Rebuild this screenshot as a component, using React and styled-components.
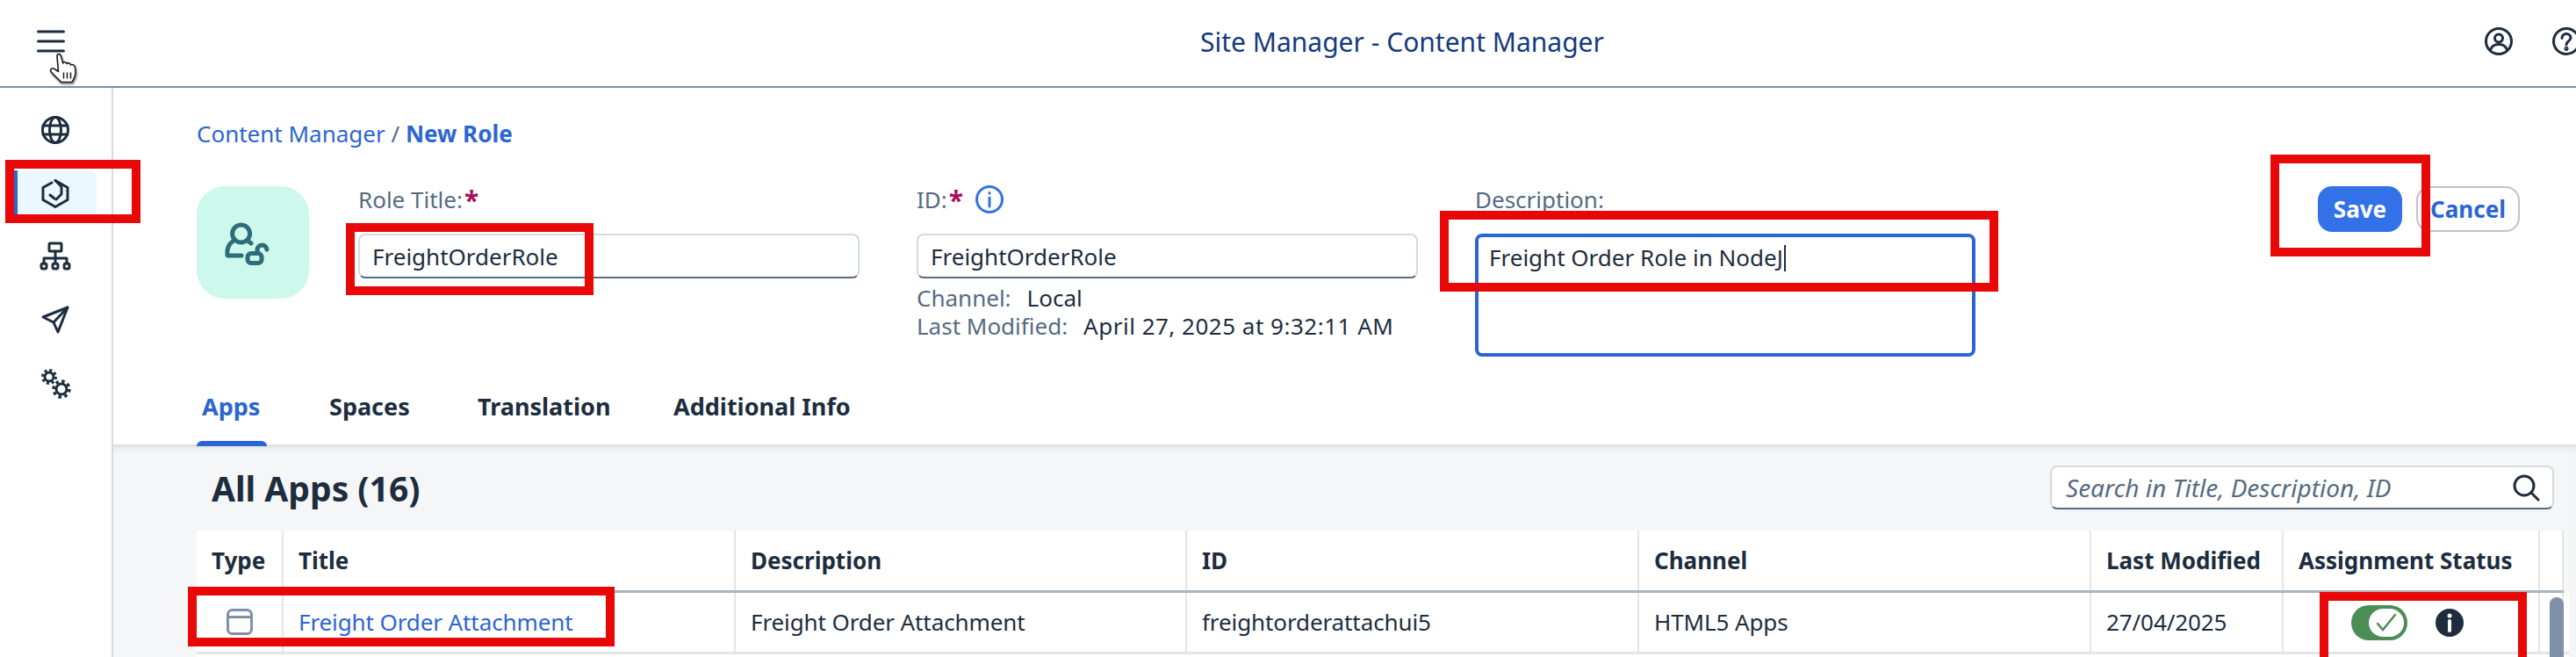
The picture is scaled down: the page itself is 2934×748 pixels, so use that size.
import styled, { createGlobalStyle } from "styled-components"

const GlobalStyle = createGlobalStyle`
  html, body {
    margin: 0;
    padding: 0;
    width: 2934px;
    height: 748px;
    overflow: hidden;
    background: #fff;
    font-family: "Noto Sans", "Open Sans", sans-serif;
    color: #1d2d3e;
  }
  * { box-sizing: border-box; }
`

const Page = styled.div`
  position: relative;
  width: 2934px;
  height: 748px;
  overflow: hidden;
`

/* shell bar */
const ShellBar = styled.header`
  display: flex;
  align-items: center;
  height: 100px;
  padding: 0 0 4px 42px;
  border-bottom: 2px solid #7a8fa6;
`
const MenuIcon = styled.svg`
  flex: none;
  width: 32px;
  height: 26px;
  fill: none;
  stroke: #1d2d3e;
  stroke-width: 3;
  stroke-linecap: round;
`
const ShellTitle = styled.div`
  flex: none;
  margin-left: 1293px;
  width: 457px;
  font-size: 30px;
  white-space: nowrap;
  color: #153a7e;
`
const ShellIcons = styled.div`
  flex: none;
  display: flex;
  gap: 45px;
  margin-left: 1006px;
`
const ShellIcon = styled.svg`
  width: 32px;
  height: 32px;
  flex: none;
  fill: none;
  stroke: #1d2d3e;
  stroke-width: 3;
`
const Cursor = styled.svg`
  position: absolute;
  left: 56px;
  top: 60px;
  width: 33px;
  height: 35px;
  filter: drop-shadow(1px 2px 1px rgba(0, 0, 0, 0.45));
`

/* main */
const Main = styled.div`
  display: flex;
  height: 648px;
`
const SideNav = styled.nav`
  flex: none;
  width: 129px;
  padding-top: 22px;
  border-right: 2px solid #d9d9d9;
  display: flex;
  flex-direction: column;
  align-items: flex-start;
  gap: 20px;
`
const NavItem = styled.div`
  display: flex;
  align-items: center;
  justify-content: center;
  width: 94px;
  height: 52px;
  margin-left: 16px;
  border-radius: 0 8px 8px 0;
  ${(p) => p.$active && "background:#ebf8ff; box-shadow: inset 4px 0 0 #2b65d4;"}
`
const NavIcon = styled.svg`
  width: 36px;
  height: 36px;
  fill: none;
  stroke: #1d2d3e;
  stroke-width: 3;
  stroke-linejoin: round;
  stroke-linecap: round;
`
const Content = styled.div`
  flex: 1;
  min-width: 0;
  display: flex;
  flex-direction: column;
`
const RoleHeader = styled.section`
  flex: none;
  position: relative;
  z-index: 1;
  height: 406px;
  padding: 36px 64px 0 95px;
`
const Breadcrumb = styled.div`
  font-size: 26px;
  line-height: 32px;
  color: #2b65d4;
  span { color: #556b82; }
  b { font-weight: 700; }
`
const FormRow = styled.div`
  display: flex;
  align-items: flex-start;
  margin-top: 44px;
`
const Avatar = styled.div`
  flex: none;
  display: flex;
  align-items: center;
  justify-content: center;
  width: 128px;
  height: 128px;
  border-radius: 32px;
  background: #ccf9eb;
  margin-right: 56px;
`
const AvatarIcon = styled.svg`
  width: 70px;
  height: 70px;
  fill: none;
  stroke: #2f6b7a;
  stroke-width: 5;
  stroke-linecap: round;
  stroke-linejoin: round;
`
const Field = styled.div`
  flex: none;
  width: ${(p) => p.$width}px;
  margin-right: 65px;
`
const Label = styled.div`
  display: flex;
  align-items: center;
  height: 32px;
  margin-bottom: 22px;
  padding-bottom: 2px;
  font-size: 26px;
  color: #556b82;
`
const Required = styled.span`
  color: #aa0d5f;
  font-size: 30px;
  font-weight: 700;
  line-height: 32px;
  margin: 2px 14px 0 2px;
`
const InfoOutline = styled.svg`
  width: 32px;
  height: 32px;
  fill: none;
  stroke: #3271e8;
  stroke-width: 3;
  stroke-linecap: round;
`
const TextInput = styled.div`
  display: flex;
  align-items: center;
  height: 51px;
  padding: 0 14px;
  background: #fff;
  border: 2px solid #d5dadd;
  border-bottom-color: #556b82;
  border-radius: 8px;
  font-size: 26px;
  white-space: nowrap;
`
const TextArea = styled.div`
  height: 140px;
  padding: 4px 12px;
  border: 4px solid #2b65d4;
  border-radius: 8px;
  font-size: 26px;
  line-height: 38px;
  white-space: nowrap;
`
const Caret = styled.span`
  display: inline-block;
  width: 2px;
  height: 30px;
  margin-left: 1px;
  vertical-align: -6px;
  background: #1d2d3e;
`
const MetaBlock = styled.div`
  margin-top: 6px;
`
const MetaRow = styled.div`
  display: flex;
  height: 32px;
  align-items: center;
  font-size: 26px;
  white-space: nowrap;
  letter-spacing: ${(p) => p.$spread || 0}px;
  span { color: #556b82; margin-right: 18px; letter-spacing: 0; }
`
const Actions = styled.div`
  display: flex;
  gap: 16px;
  margin-left: auto;
`
const Button = styled.div`
  display: flex;
  align-items: center;
  justify-content: center;
  height: 52px;
  width: ${(p) => p.$width}px;
  border-radius: 16px;
  font-size: 26px;
  font-weight: 700;
  background: ${(p) => (p.$primary ? "#3271e8" : "#fff")};
  color: ${(p) => (p.$primary ? "#fff" : "#2b65d4")};
  border: ${(p) => (p.$primary ? "none" : "2px solid #bcc3ca")};
`
const Tabs = styled.div`
  display: flex;
  margin-top: 14px;
  height: 88px;
`
const Tab = styled.div`
  position: relative;
  display: flex;
  align-items: center;
  padding: 0 0 4px ${(p) => (p.$active ? "6px" : "0")};
  width: ${(p) => p.$width}px;
  margin-right: ${(p) => p.$gap}px;
  font-size: 27px;
  font-weight: 700;
  color: ${(p) => (p.$active ? "#2b65d4" : "#1d2d3e")};
  white-space: nowrap;
  ${(p) =>
    p.$active &&
    `&::after {
      content: "";
      position: absolute;
      left: 0;
      right: 0;
      bottom: 0;
      height: 6px;
      background: #2b65d4;
      border-radius: 6px 6px 0 0;
    }`}
`

/* apps panel */
const Panel = styled.section`
  flex: 1;
  min-height: 0;
  overflow: hidden;
  padding: 0 0 0 95px;
  background: #f5f6f7;
  box-shadow: inset 0 8px 8px -6px #cfd3d6;
`
const PanelBar = styled.div`
  display: flex;
  align-items: center;
  justify-content: space-between;
  width: 2685px;
  height: 98px;
  padding-left: 17px;
`
const PanelTitle = styled.h2`
  margin: 0;
  font-size: 39px;
  font-weight: 700;
`
const Search = styled.div`
  display: flex;
  align-items: center;
  justify-content: space-between;
  width: 574px;
  height: 50px;
  padding: 0 14px 0 16px;
  background: #fff;
  border: 2px solid #d5dadd;
  border-bottom-color: #556b82;
  border-radius: 8px;
  font-size: 28px;
  font-style: italic;
  color: #556b82;
`
const SearchIcon = styled.svg`
  width: 32px;
  height: 32px;
  fill: none;
  stroke: #1d2d3e;
  stroke-width: 3;
  stroke-linecap: round;
`
const Table = styled.div`
  position: relative;
  width: 2702px;
`
const Row = styled.div`
  display: grid;
  grid-template-columns: 99px 515px 514px 515px 515px 219px 292px 27px;
  height: ${(p) => p.$height}px;
  background: #fff;
  width: ${(p) => (p.$wide ? 2702 : 2696)}px;
  border-bottom: 3px solid ${(p) => p.$line};
`
const Cell = styled.div`
  display: flex;
  align-items: center;
  justify-content: ${(p) => (p.$center ? "center" : "flex-start")};
  padding: 0 0 ${(p) => (p.$head ? 0 : 2)}px ${(p) => (p.$center ? 0 : 17)}px;
  border-right: 2px solid #e5e5e5;
  font-size: 26px;
  letter-spacing: ${(p) => (p.$head ? 0 : -0.1)}px;
  font-weight: ${(p) => (p.$head ? 700 : 400)};
  color: ${(p) => (p.$link ? "#2b65d4" : "#1d2d3e")};
  white-space: nowrap;
`
const TypeIcon = styled.svg`
  width: 30px;
  height: 30px;
  fill: none;
  stroke: #7f90a7;
  stroke-width: 3;
`
const StatusCell = styled(Cell)`
  gap: 32px;
  padding: 0 0 0 77px;
`
const Toggle = styled.div`
  display: flex;
  align-items: center;
  justify-content: flex-end;
  width: 64px;
  height: 40px;
  padding-right: 4px;
  border-radius: 20px;
  background: #4c8c55;
`
const Knob = styled.div`
  display: flex;
  align-items: center;
  justify-content: center;
  width: 40px;
  height: 32px;
  border-radius: 16px;
  background: #fff;
`
const CheckMark = styled.svg`
  width: 28px;
  height: 28px;
  fill: none;
  stroke: #4c8c55;
  stroke-width: 2.5;
  stroke-linecap: round;
`
const InfoFilled = styled.svg`
  width: 32px;
  height: 32px;
`
const ScrollThumb = styled.div`
  position: absolute;
  left: 2680px;
  top: 76px;
  width: 16px;
  height: 200px;
  border-radius: 8px;
  background: #7f90a7;
`

/* red annotations drawn over the screenshot */
const Callout = styled.div`
  position: absolute;
  z-index: 2;
  left: ${(p) => p.$x}px;
  top: ${(p) => p.$y}px;
  width: ${(p) => p.$w}px;
  height: ${(p) => p.$h}px;
  border: 10px solid #e80808;
  pointer-events: none;
`

const columns = ["Type", "Title", "Description", "ID", "Channel", "Last Modified", "Assignment Status", ""]

export default function App() {
  return (
    <Page>
      <GlobalStyle />
      <ShellBar>
        <MenuIcon viewBox="0 0 32 26">
          <path d="M1.5 2h29M1.5 13h29M1.5 24h29" />
        </MenuIcon>
        <ShellTitle>Site Manager - Content Manager</ShellTitle>
        <ShellIcons>
          <ShellIcon viewBox="0 0 32 32">
            <circle cx="16" cy="16" r="14.5" />
            <circle cx="16" cy="12.5" r="4.5" />
            <path d="M6.5 26c1.5-5 5-6.5 9.500-6.500s8 1.500 9.500 6.500" />
          </ShellIcon>
          <ShellIcon viewBox="0 0 32 32">
            <circle cx="16" cy="16" r="14.500" />
            <path d="M11 12.500c0-3 2.200-5 5-5s5 2 5 4.500c0 3.500-5 4-5 8" strokeLinecap="round" />
            <circle cx="16" cy="24.500" r="1" />
          </ShellIcon>
        </ShellIcons>
      </ShellBar>
      <Cursor viewBox="0 0 33 35">
        <path
          d="M9 3.500C9 1 12.500 1 13.300 3.500L15.800 12C16.500 10 19.500 10.300 20 12.500C21 11 24 11.500 24.500 14C26 12.800 29 13.800 29.500 16.500L30 22C30 27 28 30.500 26 33.500L13.500 33.500C11 30 6 27 2 21.500C0.500 19 3.500 16.500 6 18.500L10.500 21.500Z"
          fill="#fff"
          stroke="#1d1d1d"
          strokeWidth="1.600"
          strokeLinejoin="round"
        />
        <path d="M16.500 22.500V29.500M20.500 22.500V29.500M24.500 22.500V29.500" stroke="#1d1d1d" strokeWidth="1.500" />
      </Cursor>
      <Main>
        <SideNav>
          <NavItem>
            <NavIcon viewBox="0 0 36 36">
              <circle cx="18" cy="18" r="14.500" />
              <ellipse cx="18" cy="18" rx="6.500" ry="14.500" />
              <path d="M4 13h28M4 23h28" />
            </NavIcon>
          </NavItem>
          <NavItem $active>
            <NavIcon viewBox="0 0 36 36" strokeWidth="2.500">
              <path d="M14 6L4 11.500V25.500L18 33.500L32 25.500V11.500L18 3.500" />
              <path d="M18 3.500L25 10.500V19L19 25" />
              <path d="M12 20L17 24" />
            </NavIcon>
          </NavItem>
          <NavItem>
            <NavIcon viewBox="0 0 36 36">
              <rect x="11" y="3" width="14" height="9" rx="1" />
              <path d="M18 12v8M5 26v-6h26v6M18 20v6" />
              <rect x="2" y="26" width="6" height="6" rx="2" />
              <rect x="15" y="26" width="6" height="6" rx="2" />
              <rect x="28" y="26" width="6" height="6" rx="2" />
            </NavIcon>
          </NavItem>
          <NavItem>
            <NavIcon viewBox="0 0 36 36">
              <path d="M4 15L32 4L21 32L16 21Z" />
              <path d="M16 21L32 4" />
            </NavIcon>
          </NavItem>
          <NavItem>
            <NavIcon viewBox="0 0 36 36">
              <circle cx="11" cy="11" r="5" />
              <circle cx="11" cy="11" r="7.500" strokeWidth="3" strokeDasharray="3 2.900" strokeLinecap="butt" />
              <circle cx="25" cy="25" r="6" />
              <circle cx="25" cy="25" r="9" strokeWidth="3.500" strokeDasharray="3.500 3.560" strokeLinecap="butt" />
            </NavIcon>
          </NavItem>
        </SideNav>
        <Content>
          <RoleHeader>
            <Breadcrumb>
              Content Manager <span>/</span> <b>New Role</b>
            </Breadcrumb>
            <FormRow>
              <Avatar>
                <AvatarIcon viewBox="0 0 70 70">
                  <circle cx="21.600" cy="25" r="10" />
                  <path d="M13 33C7 37 5 43 6 50H22" />
                  <path d="M29 33L33 36" />
                  <rect x="29" y="47.500" width="16" height="11" rx="4" />
                  <path d="M40 47V43C41 37 49 36 51 43" />
                </AvatarIcon>
              </Avatar>
              <Field $width={571}>
                <Label>
                  Role Title:<Required>*</Required>
                </Label>
                <TextInput>FreightOrderRole</TextInput>
              </Field>
              <Field $width={571}>
                <Label>
                  ID:<Required>*</Required>
                  <InfoOutline viewBox="0 0 32 32">
                    <circle cx="16" cy="16" r="14.500" />
                    <path d="M16 14v10" />
                    <path d="M16 8.500v.5" />
                  </InfoOutline>
                </Label>
                <TextInput>FreightOrderRole</TextInput>
                <MetaBlock>
                  <MetaRow>
                    <span>Channel:</span> Local
                  </MetaRow>
                  <MetaRow $spread={0.5}>
                    <span>Last Modified:</span> April 27, 2025 at 9:32:11 AM
                  </MetaRow>
                </MetaBlock>
              </Field>
              <Field $width={570}>
                <Label>Description:</Label>
                <TextArea>
                  Freight Order Role in NodeJ
                  <Caret />
                </TextArea>
              </Field>
              <Actions>
                <Button $primary $width={96}>
                  Save
                </Button>
                <Button $width={118}>Cancel</Button>
              </Actions>
            </FormRow>
            <Tabs>
              <Tab $active $width={80} $gap={71}>
                Apps
              </Tab>
              <Tab $width={93} $gap={76}>
                Spaces
              </Tab>
              <Tab $width={148} $gap={75}>
                Translation
              </Tab>
              <Tab $width={198} $gap={0}>
                Additional Info
              </Tab>
            </Tabs>
          </RoleHeader>
          <Panel>
            <PanelBar>
              <PanelTitle>All Apps (16)</PanelTitle>
              <Search>
                Search in Title, Description, ID
                <SearchIcon viewBox="0 0 32 32">
                  <circle cx="14" cy="14" r="11" />
                  <path d="M22 22l8 8" />
                </SearchIcon>
              </Search>
            </PanelBar>
            <Table>
              <Row $height={71} $line="#a9b4be">
                {columns.map((c) => (
                  <Cell $head key={c}>
                    {c}
                  </Cell>
                ))}
              </Row>
              <Row $height={70} $line="#e5e5e5" $wide>
                <Cell $center>
                  <TypeIcon viewBox="0 0 30 30">
                    <rect x="1.500" y="1.500" width="27" height="27" rx="5" />
                    <path d="M1.500 9.500h27" />
                  </TypeIcon>
                </Cell>
                <Cell $link>Freight Order Attachment</Cell>
                <Cell>Freight Order Attachment</Cell>
                <Cell>freightorderattachui5</Cell>
                <Cell>HTML5 Apps</Cell>
                <Cell>27/04/2025</Cell>
                <StatusCell>
                  <Toggle>
                    <Knob>
                      <CheckMark viewBox="0 0 28 28">
                        <path d="M4 15l6 7L24 5" />
                      </CheckMark>
                    </Knob>
                  </Toggle>
                  <InfoFilled viewBox="0 0 32 32">
                    <circle cx="16" cy="16" r="16" fill="#1d2d3e" />
                    <path d="M16 14v11" stroke="#fff" strokeWidth="4" strokeLinecap="round" />
                    <circle cx="16" cy="8" r="2.500" fill="#fff" />
                  </InfoFilled>
                </StatusCell>
                <Cell />
              </Row>
              <Row $height={10} $line="#fff" $wide />
              <ScrollThumb />
            </Table>
          </Panel>
        </Content>
      </Main>
      <Callout $x={6} $y={182} $w={154} $h={72} />
      <Callout $x={394} $y={254} $w={282} $h={82} />
      <Callout $x={1640} $y={240} $w={636} $h={92} />
      <Callout $x={2586} $y={176} $w={182} $h={116} />
      <Callout $x={214} $y={668} $w={486} $h={68} />
      <Callout $x={2642} $y={674} $w={236} $h={90} />
    </Page>
  )
}
